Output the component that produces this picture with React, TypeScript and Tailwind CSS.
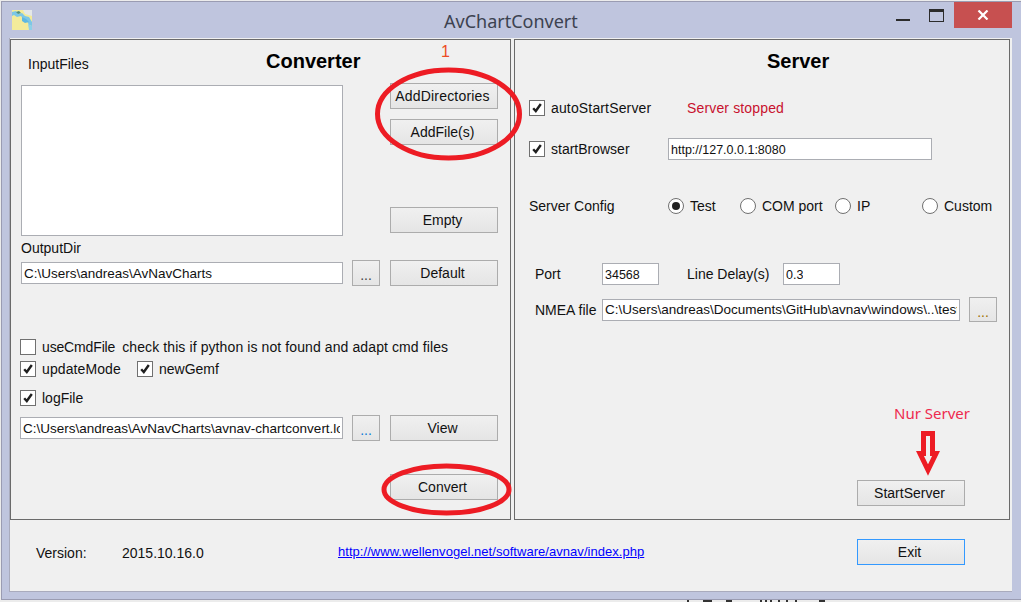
import React from "react";

function Btn({ label, focused = false, className = "" }: { label: string; focused?: boolean; className?: string }) {
  return (
    <div className={`flex shrink-0 items-center justify-center border bg-gradient-to-b from-[#f0f0f0] to-[#e5e5e5] pr-[3px] pt-[1px] text-[14px] text-[#111] ${focused ? "border-[#3399ff]" : "border-[#acacac]"} ${className}`}>
      {label}
    </div>
  );
}

function Dots({ className = "" }: { className?: string }) {
  return (
    <div className={`flex shrink-0 items-center justify-center border border-[#acacac] bg-gradient-to-b from-[#f0f0f0] to-[#e5e5e5] text-[14px] ${className}`}>
      <span className="pt-[4px] leading-none">...</span>
    </div>
  );
}

function Box({ value, className = "" }: { value: string; className?: string }) {
  return (
    <div className={`flex h-[22px] shrink-0 items-center border border-[#abadb3] bg-white pl-[2px] pr-[2px] pt-[2px] text-[#111] ${className}`}>
      <span className="block overflow-hidden whitespace-nowrap">{value}</span>
    </div>
  );
}

function Check({ checked, label, labelClass = "" }: { checked: boolean; label: string; labelClass?: string }) {
  return (
    <div className="flex h-[16px] shrink-0 items-center">
      <div className="flex h-[16px] w-[16px] shrink-0 items-center justify-center border border-[#707070] bg-white">
        {checked && (
          <svg width="12" height="12" viewBox="0 0 12 12">
            <path d="M2.2 6.2 L4.8 9 L9.8 2" fill="none" stroke="#1f1f1f" strokeWidth="2.4" />
          </svg>
        )}
      </div>
      <span className={`ml-[6px] whitespace-nowrap pt-[1px] text-[14px] text-[#111] ${labelClass}`}>{label}</span>
    </div>
  );
}

function Radio({ checked = false, label, className = "" }: { checked?: boolean; label: string; className?: string }) {
  return (
    <div className={`flex h-[16px] shrink-0 items-center ${className}`}>
      <div className="flex h-[16px] w-[16px] shrink-0 items-center justify-center rounded-full border border-[#707070] bg-white">
        {checked && <div className="h-[8px] w-[8px] rounded-full bg-[#222]" />}
      </div>
      <span className="ml-[6px] whitespace-nowrap pt-[1px] text-[14px] text-[#111]">{label}</span>
    </div>
  );
}

function AppIcon() {
  return (
    <svg width="20" height="20" viewBox="0 0 20 20" className="shrink-0">
      <rect width="20" height="20" fill="#f3eb9a" />
      <path d="M0 0H11L13 4L20 6V0Z" fill="#e4e8e8" />
      <path d="M0 2L4 1L6 4L10 3L13 6L17 7L20 12V16L17 15L15 11L12 10L9 6L5 7L2 5L0 6Z" fill="#7cc7e6" />
      <path d="M10 7L14 9L17 12L13 13L10 11Z" fill="#5db8e2" />
      <path d="M4 2L7 1L9 3L6 4Z" fill="#4f8f7f" />
      <path d="M16 14L20 16V20H17Z" fill="#8fd0e8" />
    </svg>
  );
}

export default function App() {
  return (
    <div className="relative h-[602px] w-[1021px] overflow-hidden bg-[#ececec] font-['Liberation_Sans',Arial,sans-serif]">
      <div className="ml-[1px] mt-[1px] flex h-[599px] w-[1020px] flex-col border-l border-t border-b border-[#9a9cb2] bg-[#bfc5de]">
        {/* Title bar */}
        <div className="flex h-[36px] shrink-0 items-start">
          <div className="ml-[10px] mt-[8px] shrink-0">
            <AppIcon />
          </div>
          <div className="ml-[412px] mt-[6px] w-[133px] shrink-0 whitespace-nowrap text-center font-['Noto_Sans',sans-serif] text-[18px] leading-[26px] text-[#3c4250]">
            AvChartConvert
          </div>
          <div className="ml-[319px] mt-[17px] h-[2px] w-[14px] shrink-0 bg-[#2b2b2b]" />
          <div className="ml-[19px] mt-[7px] h-[13px] w-[15px] shrink-0 border border-t-[3px] border-[#2b2b2b]" />
          <div className="ml-[10px] flex h-[26px] w-[58px] shrink-0 items-center justify-center bg-[#c75050]">
            <svg width="12" height="10" viewBox="0 0 12 10">
              <path d="M1.5 0.5 L10.5 9.5 M10.5 0.5 L1.5 9.5" stroke="#fff" strokeWidth="2.2" />
            </svg>
          </div>
        </div>

        {/* Client area */}
        <div className="ml-[7px] flex h-[554px] w-[1003px] shrink-0 flex-col border-b border-l border-[#a9abbd] bg-[#f0f0f0] pt-[1px]">
          <div className="flex h-[481px] shrink-0">
            {/* Converter */}
            <div className="flex h-[481px] w-[501px] shrink-0 flex-col border border-[#6a6a6a] pl-[9px]">
              <div className="flex h-[43px] shrink-0 items-start">
                <div className="ml-[8px] mt-[16px] w-[238px] text-[14px] leading-[16px] text-[#111]">InputFiles</div>
                <div className="mt-[9px] text-[20px] font-bold leading-[24px] text-black">Converter</div>
              </div>
              <div className="flex h-[153px] shrink-0 items-start">
                <div className="ml-[1px] mt-[2px] h-[151px] w-[322px] shrink-0 border border-[#abadb3] bg-white" />
                <div className="ml-[47px] flex flex-col">
                  <Btn label="AddDirectories" className="h-[26px] w-[108px] tracking-[0.2px]" />
                  <Btn label="AddFile(s)" className="mt-[10px] h-[26px] w-[108px]" />
                  <Btn label="Empty" className="mt-[62px] h-[26px] w-[108px]" />
                </div>
              </div>
              <div className="ml-[1px] mt-[4px] h-[16px] shrink-0 text-[14px] leading-[16px] text-[#111]">OutputDir</div>
              <div className="mt-[4px] flex h-[26px] shrink-0 items-center">
                <Box value="C:\Users\andreas\AvNavCharts" className="ml-[1px] w-[322px] text-[13.5px]" />
                <Dots className="ml-[9px] h-[26px] w-[28px] text-[#444]" />
                <Btn label="Default" className="ml-[10px] h-[26px] w-[108px]" />
              </div>
              <div className="mt-[53px] flex h-[16px] shrink-0 items-center">
                <Check checked={false} label="useCmdFile" labelClass="tracking-[-0.15px]" />
                <span className="ml-[7px] whitespace-nowrap pt-[1px] text-[14px] tracking-[0.1px] text-[#111]">check this if python is not found and adapt cmd files</span>
              </div>
              <div className="mt-[6px] flex h-[16px] shrink-0 items-center">
                <div className="w-[117px] shrink-0">
                  <Check checked label="updateMode" labelClass="tracking-[0.1px]" />
                </div>
                <Check checked label="newGemf" />
              </div>
              <div className="mt-[13px] h-[16px] shrink-0">
                <Check checked label="logFile" />
              </div>
              <div className="mt-[9px] flex h-[26px] shrink-0 items-center">
                <Box value="C:\Users\andreas\AvNavCharts\avnav-chartconvert.log" className="w-[323px] text-[13.5px]" />
                <Dots className="ml-[9px] h-[26px] w-[28px] text-[#0a78d7]" />
                <Btn label="View" className="ml-[10px] h-[26px] w-[108px]" />
              </div>
              <Btn label="Convert" className="ml-[370px] mt-[33px] h-[26px] w-[108px]" />
            </div>

            {/* Server */}
            <div className="ml-[3px] flex h-[481px] w-[496px] shrink-0 flex-col border border-[#6a6a6a] pl-[14px]">
              <div className="h-[60px] shrink-0">
                <div className="ml-[238px] pt-[9px] text-[20px] font-bold leading-[24px] text-black">Server</div>
              </div>
              <div className="flex h-[16px] shrink-0 items-center">
                <div className="w-[158px] shrink-0">
                  <Check checked label="autoStartServer" labelClass="tracking-[0.15px]" />
                </div>
                <span className="whitespace-nowrap pt-[1px] text-[14px] tracking-[0.15px] text-[#c8102e]">Server stopped</span>
              </div>
              <div className="mt-[22px] flex h-[22px] shrink-0 items-center">
                <div className="w-[139px] shrink-0">
                  <Check checked label="startBrowser" />
                </div>
                <Box value="http://127.0.0.1:8080" className="w-[264px] text-[12.5px]" />
              </div>
              <div className="mt-[38px] flex h-[16px] shrink-0 items-center">
                <span className="w-[139px] shrink-0 pt-[1px] text-[14px] text-[#111]">Server Config</span>
                <Radio checked label="Test" className="w-[72px]" />
                <Radio label="COM port" className="w-[95px]" />
                <Radio label="IP" className="w-[87px]" />
                <Radio label="Custom" />
              </div>
              <div className="ml-[6px] mt-[49px] flex h-[22px] shrink-0 items-center">
                <span className="w-[67px] shrink-0 pt-[1px] text-[14px] text-[#111]">Port</span>
                <Box value="34568" className="w-[57px] text-[12.5px]" />
                <span className="ml-[28px] w-[96px] shrink-0 pt-[1px] text-[14px] text-[#111]">Line Delay(s)</span>
                <Box value="0.3" className="w-[57px] text-[12.5px]" />
              </div>
              <div className="ml-[6px] mt-[12px] flex h-[25px] shrink-0 items-center">
                <span className="w-[67px] shrink-0 pt-[1px] text-[14px] text-[#111]">NMEA file</span>
                <Box value="C:\Users\andreas\Documents\GitHub\avnav\windows\..\test" className="w-[358px] text-[13.5px]" />
                <Dots className="ml-[9px] h-[25px] w-[28px] text-[#a07000]" />
              </div>
              <Btn label="StartServer" className="ml-[328px] mt-[158px] h-[26px] w-[108px]" />
            </div>
          </div>

          {/* Footer */}
          <div className="ml-[26px] mt-[19px] flex h-[26px] shrink-0 items-center text-[14px] text-[#111]">
            <span className="w-[86px] shrink-0 pt-[2px]">Version:</span>
            <span className="w-[216px] shrink-0 pt-[2px]">2015.10.16.0</span>
            <a href="#" className="w-[519px] shrink-0 whitespace-nowrap text-[13px] tracking-[0.04px] text-[#0000ff] underline">
              http://www.wellenvogel.net/software/avnav/index.php
            </a>
            <Btn label="Exit" focused className="h-[26px] w-[108px]" />
          </div>
        </div>
      </div>

      {/* Hand-drawn annotations lying over the window */}
      <span className="absolute left-[441px] top-[44px] text-[16px] leading-[16px] text-[#ed4b24]">1</span>
      <span className="absolute left-[894px] top-[403px] whitespace-nowrap font-['Noto_Sans',sans-serif] text-[15px] leading-[20px] text-[#ee2a4e]">Nur Server</span>
      <svg className="pointer-events-none absolute left-0 top-0" width="1021" height="602" viewBox="0 0 1021 602">
        <ellipse cx="448.5" cy="114" rx="71" ry="44" fill="none" stroke="#ed1c24" strokeWidth="5" />
        <ellipse cx="446.5" cy="489.5" rx="62.5" ry="23.5" fill="none" stroke="#ed1c24" strokeWidth="5" />
        <path d="M923.5 433.5 H932.5 V453.5 H936 L928 470 L920 453.5 H923.5 Z" fill="none" stroke="#ed1c24" strokeWidth="5" />
        <g fill="#333">
          <rect x="687" y="600" width="2" height="2" />
          <rect x="703" y="600" width="9" height="2" />
          <rect x="726" y="600" width="6" height="2" />
          <rect x="760" y="600" width="2" height="2" />
          <rect x="765" y="600" width="2" height="2" />
          <rect x="770" y="600" width="2" height="2" />
          <rect x="778" y="600" width="2" height="2" />
          <rect x="786" y="600" width="2" height="2" />
          <rect x="795" y="600" width="2" height="2" />
          <rect x="819" y="600" width="6" height="2" />
        </g>
      </svg>
    </div>
  );
}
